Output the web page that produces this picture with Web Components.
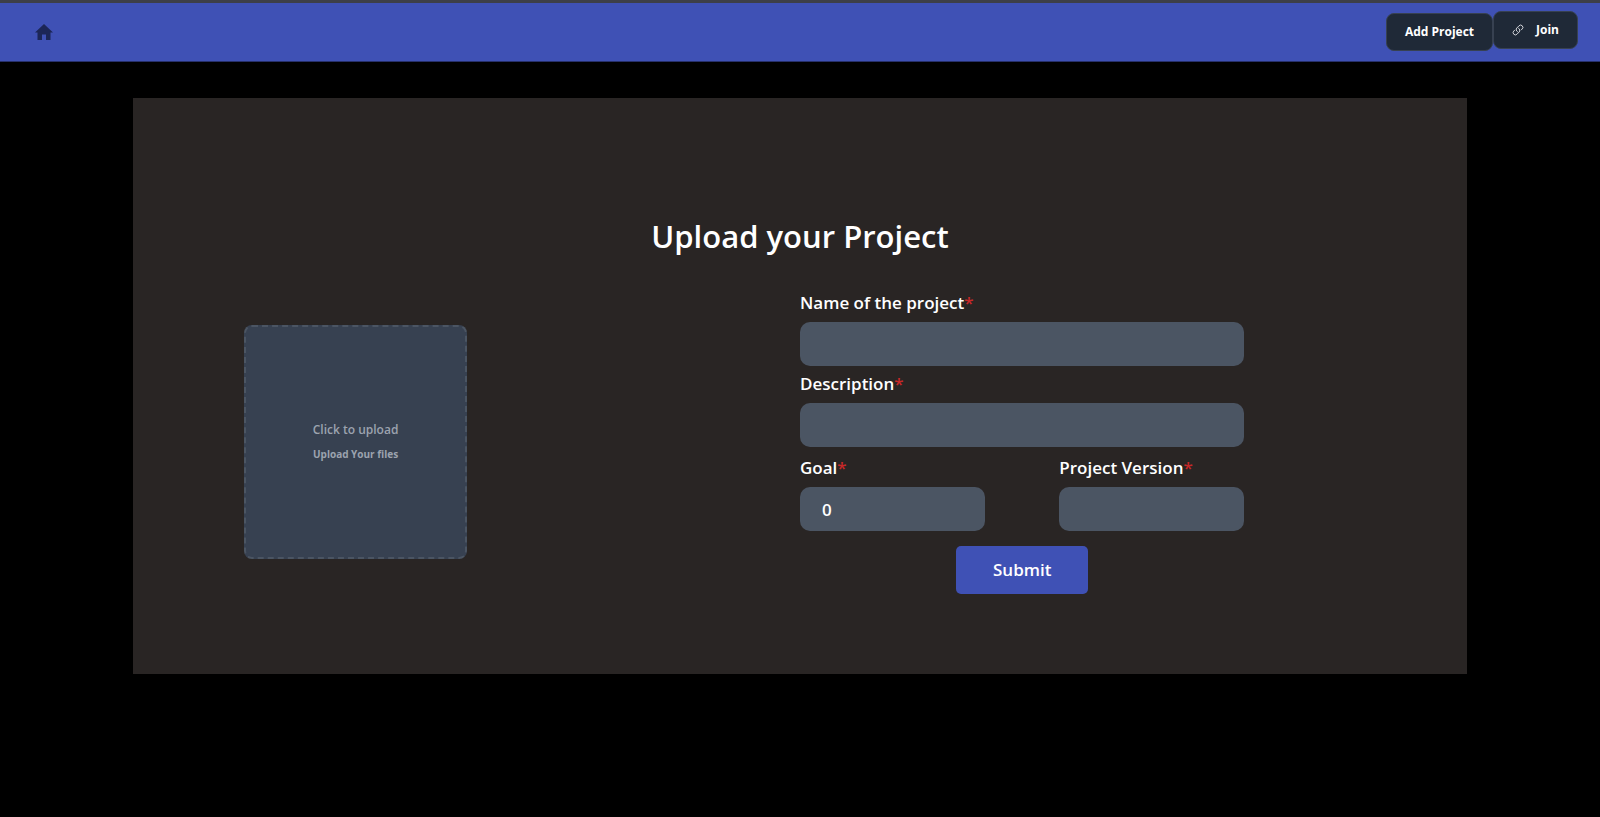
<!DOCTYPE html>
<html lang="en">
<head>
<meta charset="utf-8">
<meta name="viewport" content="width=device-width, initial-scale=1">
<title>Upload your Project</title>
<style>
  body { margin: 0; background: #000; color: #fff; font-family: "Open Sans", "Noto Sans", sans-serif; font-weight: 600; }
</style>
</head>
<body>
<project-app></project-app>

<template id="nav-button">
  <style>
    :host { display: block; }
    button {
      display: flex; align-items: center; gap: 12px; height: 38px; padding: 0 18px;
      border: 1px solid #374151; border-radius: 8px; background: #1f2937; color: #fff;
      font: inherit; font-size: 12px; font-weight: 700; line-height: 20px; white-space: nowrap; cursor: pointer;
    }
  </style>
  <button type="button"><slot name="icon"></slot><slot></slot></button>
</template>

<template id="app-nav">
  <style>
    :host { display: block; }
    nav {
      display: flex; justify-content: space-between; align-items: center;
      height: 58px; padding: 0 22px 0 32px; box-sizing: content-box;
      background: #3f51b5; border-top: 3px solid #3d3f48; border-bottom: 1px solid #27306b;
    }
    a { display: flex; padding: 0 2px; }
    .home { width: 20px; height: 20px; fill: #1c2657; }
    .actions { display: flex; align-items: center; height: 42px; }
    .join { align-self: flex-start; }
    .link { width: 12px; height: 12px; fill: none; stroke: #e5e7eb; stroke-width: 1; stroke-linecap: round; stroke-linejoin: round; }
  </style>
  <nav>
    <a href="#" aria-label="Home"><svg class="home" viewBox="0 0 20 20"><path d="M10 2 1 10.500h2.500V18H8v-5.500h4V18h4.500v-7.500H19z"/></svg></a>
    <div class="actions">
      <nav-button>Add Project</nav-button>
      <nav-button class="join"><svg slot="icon" class="link" viewBox="0 0 24 24" style="stroke-width:1.800"><path d="M13.190 8.688a4.500 4.500 0 0 1 1.242 7.244l-4.500 4.500a4.500 4.500 0 0 1-6.364-6.364l1.757-1.757m13.350-.622 1.757-1.757a4.500 4.500 0 0 0-6.364-6.364l-4.500 4.500a4.500 4.500 0 0 0 1.242 7.244"/></svg>Join</nav-button>
    </div>
  </nav>
</template>

<template id="upload-tile">
  <style>
    :host { display: block; }
    label {
      display: flex; flex-direction: column; align-items: center; justify-content: center; gap: 4px;
      box-sizing: border-box; height: 234px; border: 2px dashed #4b5563; border-radius: 8px;
      background: #374151; color: #9ca3af; cursor: pointer; text-align: center;
    }
    .lead { font-size: 12px; line-height: 20px; }
    .note { font-size: 10px; font-weight: 700; line-height: 20px; }
    input { display: none; }
  </style>
  <label for="file"><span class="lead">Click to upload</span><span class="note">Upload Your files</span><input id="file" type="file"></label>
</template>

<template id="form-field">
  <style>
    :host { display: block; }
    label { display: block; margin-bottom: 6px; font-size: 17px; line-height: 26px; white-space: nowrap; }
    .star { color: #c62828; }
    input {
      display: block; box-sizing: border-box; width: 100%; height: 44px; padding: 0 22px;
      border: 0; border-radius: 10px; background: #4b5563; color: #fff; font: inherit; font-size: 17px; line-height: 26px;
    }
  </style>
  <label for="field"><slot></slot><span class="star">*</span></label>
  <input id="field" type="text" required>
</template>

<template id="project-form">
  <style>
    :host { display: block; }
    form { display: flex; flex-direction: column; gap: 5px; }
    .pair { display: grid; grid-template-columns: 5fr 5fr; column-gap: 16.667%; margin: 3px 0 10px; }
    button {
      align-self: center; height: 48px; padding: 0 37px; border: 0; border-radius: 5px;
      background: #3f51b5; color: #fff; font: inherit; font-size: 17px; line-height: 26px; cursor: pointer;
    }
  </style>
  <form>
    <form-field>Name of the project</form-field>
    <form-field>Description</form-field>
    <div class="pair">
      <form-field value="0">Goal</form-field>
      <form-field>Project Version</form-field>
    </div>
    <button type="submit">Submit</button>
  </form>
</template>

<template id="project-app">
  <style>
    :host { display: block; }
    main {
      width: 83.333%; margin: 36px auto; padding: 112px 0 80px; box-sizing: border-box;
      background: #292524;
    }
    h1 { margin: 0 0 28px; text-align: center; font: inherit; font-size: 31px; line-height: 52px; }
    .columns { display: grid; grid-template-columns: repeat(12, 1fr); align-items: start; }
    upload-tile { grid-column: 2 / span 2; margin-top: 35px; }
    project-form { grid-column: 7 / span 4; }
  </style>
  <app-nav></app-nav>
  <main>
    <h1>Upload your Project</h1>
    <div class="columns">
      <upload-tile></upload-tile>
      <project-form></project-form>
    </div>
  </main>
</template>

<script>
  class TemplateElement extends HTMLElement {
    connectedCallback() {
      if (this.shadowRoot) return;
      const root = this.attachShadow({ mode: "open" });
      root.append(document.getElementById(this.localName).content.cloneNode(true));
      this.ready(root);
    }
    ready() {}
  }
  class NavButton extends TemplateElement {}
  class AppNav extends TemplateElement {}
  class UploadTile extends TemplateElement {}
  class FormField extends TemplateElement {
    ready(root) {
      root.querySelector("input").value = this.getAttribute("value") || "";
    }
  }
  class ProjectForm extends TemplateElement {
    ready(root) {
      root.querySelector("form").addEventListener("submit", (event) => event.preventDefault());
    }
  }
  class ProjectApp extends TemplateElement {}

  customElements.define("nav-button", NavButton);
  customElements.define("app-nav", AppNav);
  customElements.define("upload-tile", UploadTile);
  customElements.define("form-field", FormField);
  customElements.define("project-form", ProjectForm);
  customElements.define("project-app", ProjectApp);
</script>
</body>
</html>
